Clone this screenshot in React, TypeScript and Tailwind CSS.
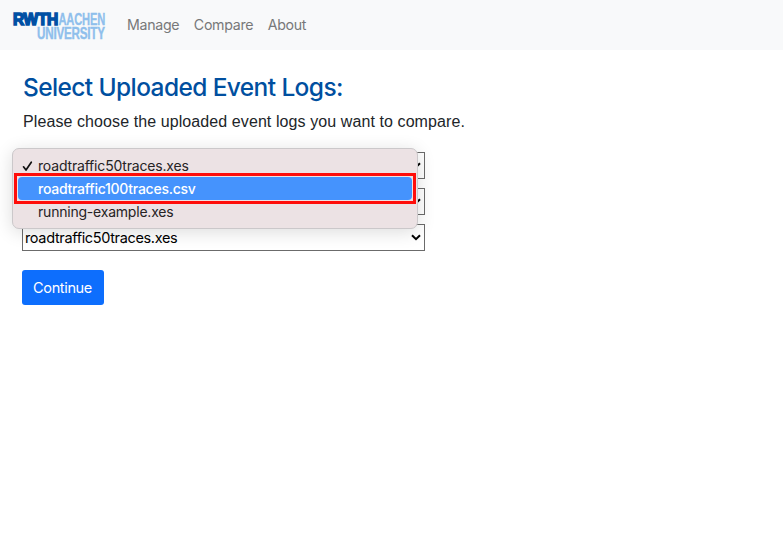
import React from "react";

const logs = ["roadtraffic50traces.xes", "roadtraffic100traces.csv", "running-example.xes"];

function Logo() {
  return (
    <svg width="94" height="36" viewBox="0 0 94 36" role="img" aria-label="RWTH Aachen University" className="block overflow-visible font-['Liberation_Sans',sans-serif]">
      <text x="0" y="18" fontSize="16.4" fontWeight="700" fill="#0050a4" stroke="#0050a4" strokeWidth="1.6" textLength="45" lengthAdjust="spacingAndGlyphs">RWTH</text>
      <text x="45.5" y="18" fontSize="16.5" fontWeight="700" fill="#8fbfec" stroke="#8fbfec" strokeWidth="0.3" textLength="46.5" lengthAdjust="spacingAndGlyphs">AACHEN</text>
      <text x="24" y="31.6" fontSize="16.5" fontWeight="700" fill="#8fbfec" stroke="#8fbfec" strokeWidth="0.4" textLength="67.8" lengthAdjust="spacingAndGlyphs">UNIVERSITY</text>
    </svg>
  );
}

function SelectBox() {
  return (
    <div className="flex h-[27px] w-[403px] items-center justify-between border border-[#6b6b6b] bg-white pr-[3px] pl-[2px] text-[14.5px] text-black">
      <span className="tracking-[-0.35px]">{logs[0]}</span>
      <svg width="10" height="7" viewBox="0 0 10 7" fill="none">
        <path d="M1 1.2 5 5.2 9 1.2" stroke="#000" strokeWidth="2" />
      </svg>
    </div>
  );
}

function OptionsMenu() {
  return (
    <div className="absolute -top-[4px] -left-[10px] h-[81px] w-[406px] rounded-[7px] border border-[#cbc8ca] bg-[#ece2e4] pt-[5px] pr-[5px] pl-[5px] text-[14px] text-[#262324] shadow-[0_3px_18px_rgba(0,0,0,0.14)]">
      <div className="flex h-[23px] items-center">
        <svg width="11" height="11" viewBox="0 0 11 11" fill="none" className="mr-[5px] ml-[4px] translate-y-px">
          <path d="M1.5 5.8 4 9 9.3 1.2" stroke="#111" strokeWidth="1.7" strokeLinecap="round" strokeLinejoin="round" />
        </svg>
        <span className="leading-[17px] tracking-[-0.18px]">{logs[0]}</span>
      </div>
      <div className="flex h-[23px] items-center rounded-[4px] bg-[#4593fd] pl-[20px] font-medium text-white">
        <span className="leading-[17px] tracking-[-0.26px]">{logs[1]}</span>
      </div>
      <div className="flex h-[23px] items-center pl-[20px]">
        <span className="leading-[17px] tracking-[-0.21px]">{logs[2]}</span>
      </div>
      <div className="absolute top-[24px] left-px h-[31px] w-[402px] border-[3px] border-[#ff0d0a]" />
    </div>
  );
}

export default function App() {
  return (
    <div className="h-[558px] w-[783px] overflow-hidden bg-white font-['Inter',sans-serif] text-[#212529]">
      <nav className="flex h-[50px] items-center bg-[#f8f9fa] pl-[13px] text-[14.2px] tracking-[-0.3px] text-[#777879]">
        <Logo />
        <div className="ml-[20px] flex gap-[14.5px]">
          <a>Manage</a>
          <a>Compare</a>
          <a>About</a>
        </div>
      </nav>
      <main className="pl-[22px]">
        <h1 className="pt-[22px] pl-px text-[24.5px] leading-[30px] font-medium tracking-[-0.61px] text-[#004f9f]">Select Uploaded Event Logs:</h1>
        <p className="mt-[8px] pl-px font-['Liberation_Sans',sans-serif] text-[16px] leading-[24px] tracking-[0.09px]">Please choose the uploaded event logs you want to compare.</p>
        <div className="relative mt-[18px] flex flex-col gap-[9px]">
          <SelectBox />
          <SelectBox />
          <SelectBox />
          <OptionsMenu />
        </div>
        <button className="mt-[19px] flex h-[35px] w-[82px] items-center justify-center rounded-[3px] bg-[#0d6efd] pr-px text-[14.5px] tracking-[-0.35px] text-white">Continue</button>
      </main>
    </div>
  );
}
